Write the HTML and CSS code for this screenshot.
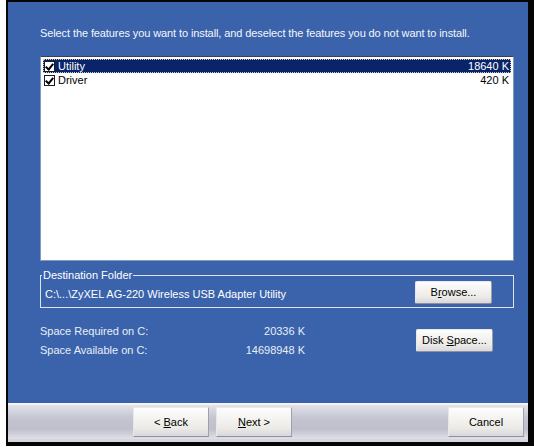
FILE: index.html
```html
<!DOCTYPE html>
<html lang="en">

<head>
    <meta charset="UTF-8">
    <title>Select Features</title>
    <link rel="stylesheet" href="styles.css">
</head>

<body>
    <div class="dlg">
        <div class="main">
            <p class="intro">Select the features you want to install, and deselect the features you do not want to install.</p>
            <ul class="features">
                <li class="sel"><span class="chk"></span><span class="name">Utility</span><span class="size">18640 K</span></li>
                <li><span class="chk"></span><span class="name">Driver</span><span class="size">420 K</span></li>
            </ul>
            <fieldset class="dest">
                <legend>Destination Folder</legend>
                <span class="path">C:\...\ZyXEL AG-220 Wireless USB Adapter Utility</span>
                <a class="btn" href="javascript:;">B<u>r</u>owse...</a>
            </fieldset>
            <div class="space">
                <div class="rows">
                    <div class="row"><span>Space Required on C:</span><span>20336 K</span></div>
                    <div class="row"><span>Space Available on C:</span><span>14698948 K</span></div>
                </div>
                <a class="btn" href="javascript:;">Disk <u>S</u>pace...</a>
            </div>
        </div>
        <div class="bar">
            <a class="btn back" href="javascript:;">&lt; <u>B</u>ack</a>
            <a class="btn next" href="javascript:;"><u>N</u>ext &gt;</a>
            <a class="btn cancel" href="javascript:;">Cancel</a>
        </div>
    </div>
</body>

</html>
```

FILE: styles.css
```css
* {
    margin: 0;
    padding: 0;
    box-sizing: border-box;
}

body {
    background: #fff;
    font-family: "Liberation Sans", Arial, sans-serif;
    font-size: 11px;
}

a {
    text-decoration: none;
}

ul li {
    list-style: none;
}

.dlg {
    width: 528px;
    height: 446px;
    margin-left: 6px;
    border: solid #050505;
    border-width: 2px 6px 4px 2px;
    display: flex;
    flex-direction: column;
}

.main {
    flex: 1;
    background: #3a63ab;
    padding: 25px 14px 0 32px;
    color: #fff;
}

.intro {
    letter-spacing: -0.1px;
    line-height: 13px;
    color: #f4f6fb;
}

.features {
    margin-top: 16px;
    height: 205px;
    background: #fff;
    border: 1px solid #7f9db9;
    border-top-color: #404040;
    padding: 2px 2px 0 2px;
    color: #000;
}

.features li {
    display: flex;
    align-items: center;
    height: 14px;
    padding-right: 2px;
}

.features li.sel {
    background: #0a246a;
    color: #fff;
    outline: 1px dotted #c8c8c8;
    outline-offset: -1px;
}

.chk {
    position: relative;
    width: 11px;
    height: 11px;
    margin: 0 3px 0 1px;
    background: #fff;
    border: 1px solid #1c1c1c;
}

.chk::before {
    content: "";
    position: absolute;
    left: 2px;
    top: 0;
    width: 3px;
    height: 6px;
    border: solid #000;
    border-width: 0 2px 2px 0;
    transform: rotate(40deg);
}

.features .name {
    flex: 1;
}

.dest {
    margin-top: 9px;
    height: 38px;
    border: 1px solid #dce4f2;
    border-radius: 0;
    padding: 0 21px 0 4px;
    display: flex;
    align-items: center;
    justify-content: space-between;
}

.dest legend {
    padding: 0 1px;
    margin-left: -3px;
    line-height: 11px;
}

.dest .path {
    margin-top: -1px;
}

.btn {
    display: inline-block;
    width: 77px;
    height: 23px;
    line-height: 21px;
    text-align: center;
    color: #000;
    border: 1px solid;
    border-color: #e8e8ea #a0a0a8 #9090a0 #e8e8ea;
    border-radius: 2px;
    background: linear-gradient(#fdfdfd, #ecebe6 70%, #d8d8de);
}

.dest .btn {
    margin-top: -4px;
}

.space {
    display: flex;
    align-items: center;
    margin-top: 13px;
    padding-right: 21px;
}

.rows {
    width: 265px;
    margin-right: auto;
    color: #e8eef8;
}

.row {
    display: flex;
    justify-content: space-between;
    height: 19px;
    align-items: center;
}

.bar {
    height: 39px;
    border-top: 2px solid #f4f4f6;
    background: linear-gradient(#e2e2ea, #c4c4d2 40%, #bfbfcc 70%, #e0e0e8);
    display: flex;
    align-items: flex-end;
    padding: 0 4px 2px 125px;
    border-bottom: 3px solid #d6d6de;
}

.bar .btn {
    height: 30px;
    line-height: 28px;
    border-radius: 0;
    width: 76px;
}

.bar .next {
    margin-left: 7px;
}

.bar .cancel {
    margin-left: auto;
}
```
